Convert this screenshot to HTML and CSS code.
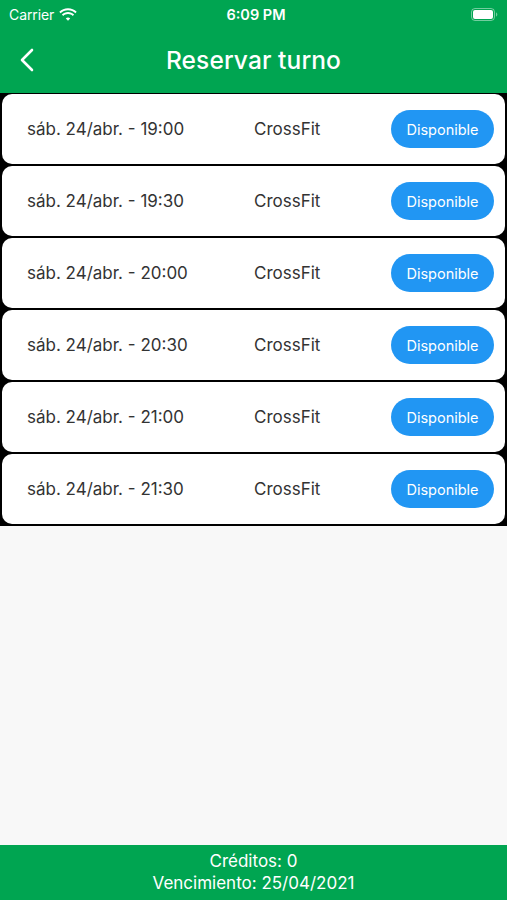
FILE: index.html
```html
<!DOCTYPE html>
<html lang="es">
<head>
<meta charset="utf-8">
<link rel="stylesheet" href="styles.css">
</head>
<body>
<div class="app">
  <header class="top">
    <div class="status">
      <div class="status-left">
        <span class="carrier">Carrier</span>
        <svg class="wifi" width="18" height="13" viewBox="0 0 18 13">
          <path d="M9 2.2c2.9 0 5.5 1.1 7.4 3l1.3-1.4C15.4 1.5 12.4.2 9 .2S2.6 1.5.3 3.8l1.3 1.4c1.9-1.9 4.5-3 7.4-3z" fill="#fff"/>
          <path d="M9 6c1.9 0 3.5.7 4.8 1.9l1.3-1.4C13.5 4.9 11.4 4 9 4s-4.5.9-6.1 2.5l1.3 1.4C5.5 6.7 7.1 6 9 6z" fill="#fff"/>
          <path d="M9 9.6c.9 0 1.6.3 2.200.9L9 12.8l-2.2-2.3c.6-.6 1.3-.9 2.2-.9z" fill="#fff"/>
        </svg>
      </div>
      <span class="time">6:09 PM</span>
      <div class="status-right">
        <svg class="battery" width="27" height="13" viewBox="0 0 27 13">
          <rect x="0.5" y="0.5" width="23" height="12" rx="3.5" fill="none" stroke="#fff" stroke-opacity="0.45"/>
          <rect x="2" y="2" width="20" height="9" rx="2" fill="#fff"/>
          <path d="M25 4.5v4c.8-.3 1.300-1.1 1.300-2s-.5-1.7-1.300-2z" fill="#fff" fill-opacity="0.45"/>
        </svg>
      </div>
    </div>
    <div class="navbar">
      <svg class="back" width="14" height="24" viewBox="0 0 14 24">
        <path d="M12 2L2 12l10 10" fill="none" stroke="#fff" stroke-width="2.6" stroke-linecap="round" stroke-linejoin="round"/>
      </svg>
      <h1 class="title">Reservar turno</h1>
    </div>
  </header>

  <main class="content">
    <div class="list">
      <div class="card"><span class="date">sáb. 24/abr. - 19:00</span><span class="activity">CrossFit</span><span class="btn">Disponible</span></div>
      <div class="card"><span class="date">sáb. 24/abr. - 19:30</span><span class="activity">CrossFit</span><span class="btn">Disponible</span></div>
      <div class="card"><span class="date">sáb. 24/abr. - 20:00</span><span class="activity">CrossFit</span><span class="btn">Disponible</span></div>
      <div class="card"><span class="date">sáb. 24/abr. - 20:30</span><span class="activity">CrossFit</span><span class="btn">Disponible</span></div>
      <div class="card"><span class="date">sáb. 24/abr. - 21:00</span><span class="activity">CrossFit</span><span class="btn">Disponible</span></div>
      <div class="card"><span class="date">sáb. 24/abr. - 21:30</span><span class="activity">CrossFit</span><span class="btn">Disponible</span></div>
    </div>
  </main>

  <footer class="bottom">
    <div>Créditos: 0</div>
    <div>Vencimiento: 25/04/2021</div>
  </footer>
</div>
</body>
</html>
```

FILE: styles.css
```css
* { box-sizing: border-box; }
html, body { margin: 0; padding: 0; }
body {
  font-family: Inter, "Noto Sans", "Liberation Sans", sans-serif;
  background: #f8f8f8;
}
.app {
  display: flex;
  flex-direction: column;
  height: 900px;
  width: 507px;
}
.top {
  background: #00a551;
  color: #fff;
}
.status {
  height: 28px;
  display: flex;
  align-items: center;
  justify-content: space-between;
  padding: 0 9px 0 9px;
}
.status-left {
  display: flex;
  align-items: center;
  gap: 5px;
  width: 120px;
}
.carrier {
  font-size: 14px;
  letter-spacing: -0.1px;
}
.time {
  font-size: 14.5px;
  font-weight: 600;
  margin-left: 5px;
}
.status-right {
  width: 120px;
  display: flex;
  justify-content: flex-end;
}
.navbar {
  height: 65px;
  display: flex;
  align-items: center;
  justify-content: center;
  position: relative;
}
.back {
  position: absolute;
  left: 20px;
  top: 20px;
}
.title {
  margin: 0;
  font-size: 24.5px;
  font-weight: 500;
  letter-spacing: 0.1px;
  padding-bottom: 1px;
}
.content {
  flex: 1;
  background: #f8f8f8;
}
.list {
  background: #000;
  padding: 1px 2px 0 2px;
  display: flex;
  flex-direction: column;
}
.card {
  background: #fff;
  height: 70px;
  border-radius: 10px;
  margin-bottom: 2px;
  display: flex;
  align-items: center;
  padding: 0 11px 0 25px;
  color: #333;
  font-size: 17px;
}
.date {
  width: 227px;
}
.activity {
  flex: 1;
}
.btn {
  background: #2196f3;
  color: #fff;
  font-size: 14.5px;
  font-weight: 400;
  height: 38px;
  width: 103px;
  border-radius: 19px;
  display: flex;
  align-items: center;
  justify-content: center;
}
.bottom {
  background: #00a551;
  color: #fff;
  height: 55px;
  display: flex;
  flex-direction: column;
  align-items: center;
  justify-content: center;
  font-size: 17px;
  line-height: 22px;
  padding-bottom: 1px;
}
```
